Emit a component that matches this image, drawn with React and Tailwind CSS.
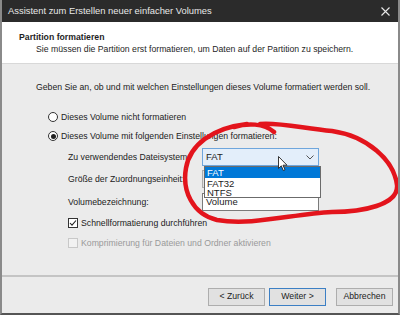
import React from "react";

const font = { fontFamily: '"Liberation Sans", Arial, sans-serif' };

function Radio({ checked }) {
  return (
    <span className="w-[10px] h-[10px] rounded-full border border-[#333] bg-white flex items-center justify-center shrink-0">
      {checked && <span className="w-[5px] h-[5px] rounded-full bg-[#222]" />}
    </span>
  );
}

function Check({ checked, disabled }) {
  return (
    <span
      className={
        "w-[10px] h-[10px] border flex items-center justify-center shrink-0 " +
        (disabled ? "border-[#c8c8c8] bg-[#f2f2f2]" : "border-[#333] bg-white")
      }
    >
      {checked && (
        <svg width="8" height="8" viewBox="0 0 8 8">
          <path d="M1 4 L3 6.2 L7 1.5" stroke="#222" strokeWidth="1.1" fill="none" />
        </svg>
      )}
    </span>
  );
}

function Btn({ children, primary }) {
  return (
    <div
      className={
        "w-[57px] h-[18px] flex items-center justify-center bg-[#e1e1e1] text-[8.7px] text-[#222] border " +
        (primary ? "border-[#3c7fc4] border-[1.5px]" : "border-[#adadad]")
      }
    >
      {children}
    </div>
  );
}

export default function App() {
  return (
    <div
      className="relative w-[400px] h-[315px] overflow-hidden bg-[#ebebeb] flex flex-col border-l-2 border-r-2 border-b-2 border-l-[#8a8a8a] border-r-[#8a8a8a] border-b-[#555]"
      style={font}
    >
      {/* title bar */}
      <div className="h-[22px] bg-[#2b2b2b] flex items-center justify-between pl-[6px] pr-[8px] shrink-0">
        <span className="text-[9.4px] text-[#e8e8e8]">Assistent zum Erstellen neuer einfacher Volumes</span>
        <svg width="9" height="9" viewBox="0 0 9 9">
          <path d="M0.5 0.5 L8.5 8.5 M8.5 0.5 L0.5 8.5" stroke="#e8e8e8" strokeWidth="1.1" />
        </svg>
      </div>

      {/* header */}
      <div className="h-[42px] bg-white border-b border-[#d8d8d8] shrink-0 pt-[9px] pl-[17px] text-[8.7px] leading-[12px] text-[#1e1e1e]">
        <div className="font-bold">Partition formatieren</div>
        <div className="pl-[17px]">Sie müssen die Partition erst formatieren, um Daten auf der Partition zu speichern.</div>
      </div>

      {/* body */}
      <div className="flex-1 flex flex-col text-[8.7px] leading-[12px] text-[#222]">
        <div className="mt-[17px] pl-[34px]">Geben Sie an, ob und mit welchen Einstellungen dieses Volume formatiert werden soll.</div>

        <div className="mt-[18px] pl-[46px] flex items-center gap-[3px]">
          <Radio />
          <span>Dieses Volume nicht formatieren</span>
        </div>
        <div className="mt-[7px] pl-[46px] flex items-center gap-[3px]">
          <Radio checked />
          <span>Dieses Volume mit folgenden Einstellungen formatieren:</span>
        </div>

        <div className="mt-[6px] pl-[66px] flex flex-col gap-[4px]">
          <div className="flex items-center h-[18px]">
            <span className="w-[134px]">Zu verwendendes Dateisystem:</span>
            <div className="w-[117px] h-[18px] border border-[#6fa6dc] bg-[#e3eefa] flex items-center justify-between pl-[3px] pr-[4px] text-[9.5px]">
              <span>FAT</span>
              <svg width="8" height="5" viewBox="0 0 8 5">
                <path d="M0.5 0.5 L4 4 L7.5 0.5" stroke="#555" strokeWidth="1" fill="none" />
              </svg>
            </div>
          </div>
          <div className="flex items-center h-[18px]">
            <span className="w-[134px]">Größe der Zuordnungseinheit:</span>
            <div className="w-[117px] h-[18px] border border-[#adadad] bg-[#e1e1e1]" />
          </div>
          <div className="flex items-center h-[18px] mt-[1px]">
            <span className="w-[134px]">Volumebezeichnung:</span>
            <div className="w-[117px] h-[18px] border border-[#7a7a7a] bg-white pl-[3px] flex items-center text-[9.5px]">Volume</div>
          </div>
        </div>

        <div className="mt-[6px] pl-[66px] flex items-center gap-[3px]">
          <Check checked />
          <span>Schnellformatierung durchführen</span>
        </div>
        <div className="mt-[8px] pl-[66px] flex items-center gap-[3px] text-[#9a9a9a]">
          <Check disabled />
          <span>Komprimierung für Dateien und Ordner aktivieren</span>
        </div>
      </div>

      {/* footer */}
      <div className="h-[38px] shrink-0 border-t-2 border-[#c4c4c4] flex items-start justify-end pt-[11px] pr-[5px]">
        <Btn>&lt; Zurück</Btn>
        <div className="ml-[4px]">
          <Btn primary>Weiter &gt;</Btn>
        </div>
        <div className="ml-[10px]">
          <Btn>Abbrechen</Btn>
        </div>
      </div>

      {/* open dropdown list */}
      <div className="absolute left-[202px] top-[166px] w-[117px] h-[32px] bg-white border border-[#6b6b6b] flex flex-col text-[9.5px] leading-[9px] text-[#222]">
        <div className="bg-[#0078d7] text-white h-[11px] pl-[2px] flex items-center">FAT</div>
        <div className="pl-[2px] h-[10px] flex items-center">FAT32</div>
        <div className="pl-[2px] h-[9px] flex items-center">NTFS</div>
      </div>

      {/* mouse pointer */}
      <svg className="absolute left-[276px] top-[156px]" width="10" height="16" viewBox="0 0 10 16">
        <path d="M0.5 0.5 L0.5 12.5 L3.3 9.8 L5.3 14.5 L7 13.8 L5 9.2 L9 9.2 Z" fill="white" stroke="#222" strokeWidth="0.9" />
      </svg>

      {/* red annotation */}
      <svg className="absolute left-0 top-0 pointer-events-none" width="400" height="315" viewBox="0 0 400 315">
        <path
          d="M232 127 C245 123, 262 123, 272 132 M258 124 C275 122, 300 128, 330 131 C365 136, 392 160, 395 185 C397 205, 360 212, 330 212 C290 214, 250 226, 215 220 C190 214, 180 190, 184 168 C188 145, 210 128, 245 124"
          stroke="#e3141c"
          strokeWidth="4.5"
          fill="none"
          strokeLinecap="round"
        />
      </svg>
    </div>
  );
}
